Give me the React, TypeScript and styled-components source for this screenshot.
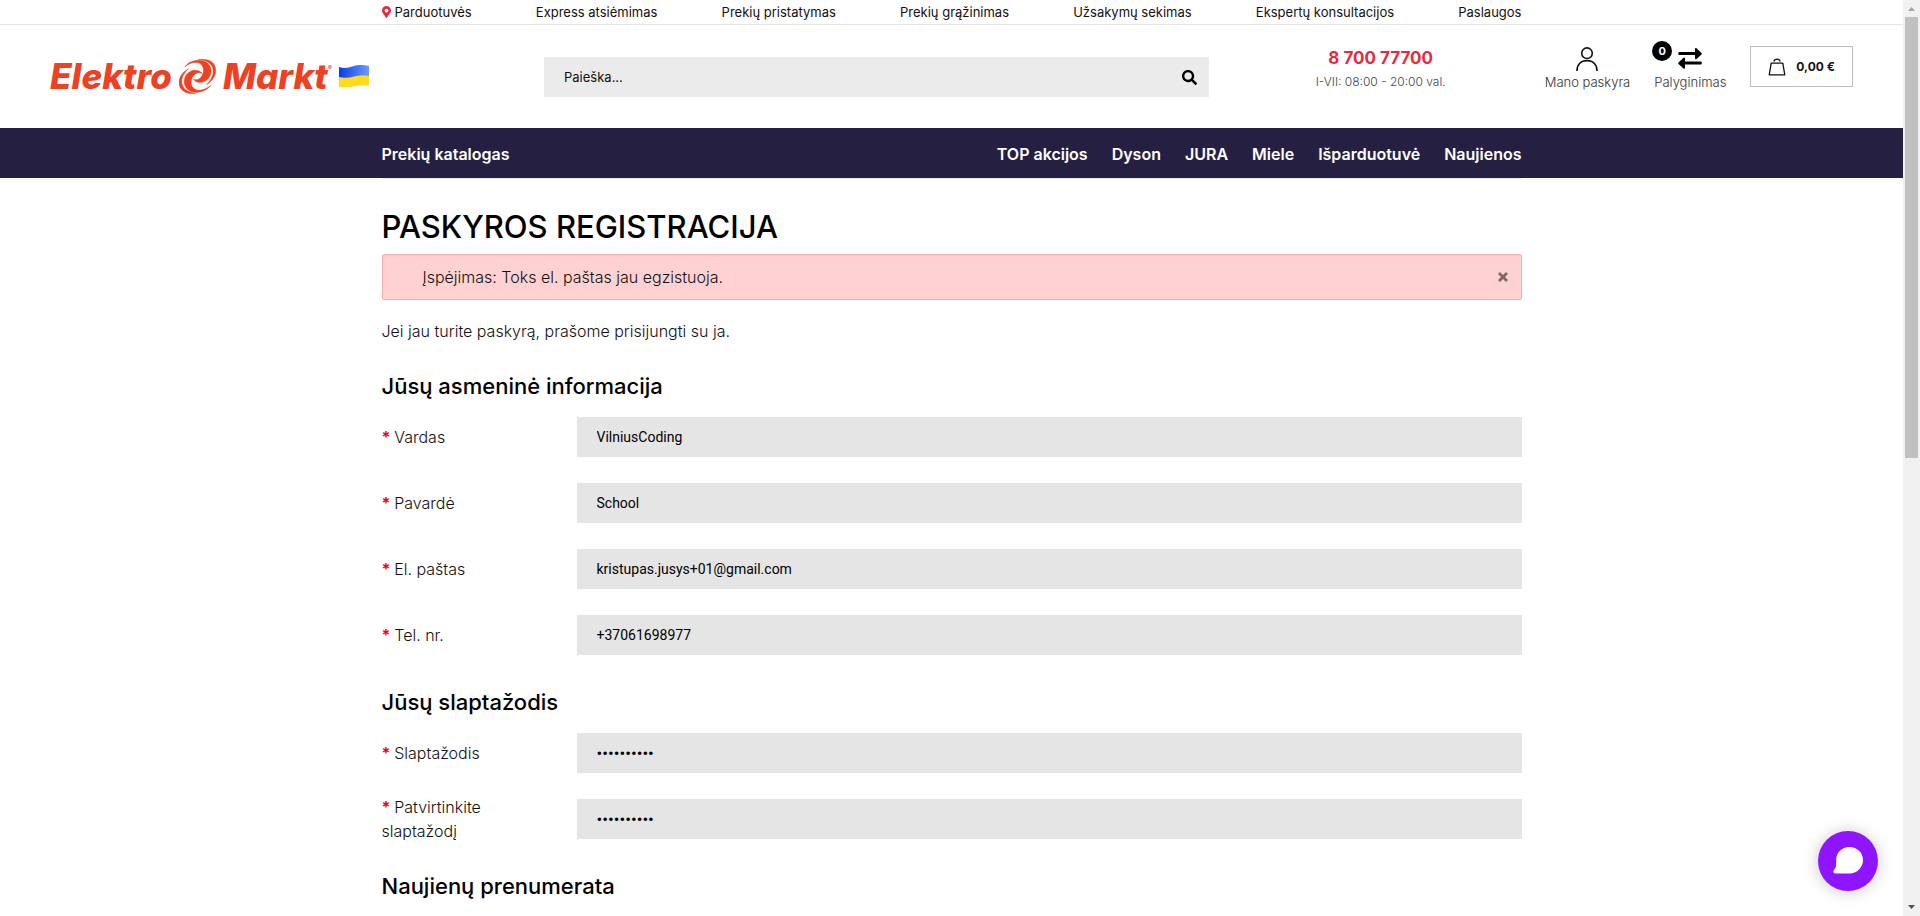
import React from "react";
import styled, { createGlobalStyle } from "styled-components";
import { FaMapMarkerAlt, FaSearch } from "react-icons/fa";

const GlobalStyle = createGlobalStyle`
  *, *::before, *::after { box-sizing: border-box; }
  body {
    margin: 0;
    background: #fff;
    color: #111;
    font-family: Inter, "Liberation Sans", sans-serif;
    scrollbar-width: none;
  }
  body::-webkit-scrollbar { display: none; }
  a { color: inherit; text-decoration: none; }
  svg { display: block; }
`;

const Page = styled.div`
  min-height: 100vh;
  padding-right: 17px;
`;

const Container = styled.div`
  width: 100%;
  max-width: 1170px;
  margin: 0 auto;
  padding: 0 15px;
`;

const TopBar = styled.nav`
  border-bottom: 1px solid #e5e5e5;
`;

const TopLinks = styled(Container)`
  display: flex;
  justify-content: space-between;
  align-items: center;
  height: 24px;
  font-size: 13px;
  line-height: 24px;
`;

const TopLink = styled.a`
  display: flex;
  align-items: center;
  gap: 4px;
`;

const Pin = styled(FaMapMarkerAlt)`
  width: 9px;
  height: 12px;
  color: #e62b40;
`;

const Header = styled.header`
  display: grid;
  grid-template-columns: 494px minmax(0, 1fr) 336px auto;
  height: 103px;
  padding: 0 50px;
`;

const Logo = styled.a`
  display: flex;
  align-items: center;
  align-self: start;
  gap: 7px;
  height: 37px;
  margin-top: 33px;
  color: #ee4023;
  font-size: 35px;
  font-weight: 800;
  font-style: italic;
  font-optical-sizing: none;
  line-height: 37px;
`;

const Swirl = styled.svg`
  width: 37px;
  height: 35px;
  flex: none;
`;

const LogoWord = styled.span`
  display: flex;
`;

const Registered = styled.sup`
  font-size: 6px;
  line-height: 20px;
`;

const Flag = styled.svg`
  width: 30px;
  height: 23px;
  flex: none;
`;

const SearchForm = styled.form`
  display: flex;
  align-self: start;
  height: 40px;
  margin-top: 32px;
  background: #ebebeb;
`;

const SearchInput = styled.input`
  flex: 1;
  min-width: 0;
  border: 0;
  padding: 0 20px;
  background: transparent;
  color: #111;
  font-family: inherit;
  font-size: 13px;
  &::placeholder { color: #111; opacity: 1; }
`;

const SearchButton = styled.button`
  display: flex;
  align-items: center;
  border: 0;
  padding: 0 12px;
  background: transparent;
  color: #000;
  font-size: 15px;
`;

const Contact = styled.div`
  display: flex;
  flex-direction: column;
  align-items: center;
  gap: 4px;
  padding: 22px 0 0 8px;
`;

const Phone = styled.a`
  color: #e62b40;
  font-size: 17px;
  font-weight: 700;
  line-height: 22px;
`;

const Hours = styled.span`
  color: #444;
  font-size: 12px;
  font-weight: 300;
  line-height: 18px;
`;

const Actions = styled.div`
  display: flex;
  align-items: flex-start;
  gap: 24px;
`;

const Action = styled.a`
  position: relative;
  display: flex;
  flex-direction: column;
  align-items: center;
  gap: 2px;
  padding-top: 22px;
  color: #333;
  font-size: 13px;
  font-weight: 300;
  line-height: 18px;
`;

const UserIcon = styled.svg`
  width: 22px;
  height: 24px;
`;

const ArrowsIcon = styled.svg`
  width: 24px;
  height: 24px;
`;

const Count = styled.span`
  position: absolute;
  top: 16px;
  left: -2px;
  width: 20px;
  height: 20px;
  border-radius: 50%;
  background: #000;
  color: #fff;
  font-size: 11px;
  font-weight: 700;
  line-height: 20px;
  text-align: center;
`;

const CartButton = styled.button`
  display: flex;
  align-items: center;
  gap: 10px;
  height: 41px;
  margin-top: 21px;
  padding: 0 17px;
  border: 1px solid #bdbdbd;
  background: #fff;
  color: #111;
  font-family: inherit;
  font-size: 12px;
  font-weight: 700;
`;

const BagIcon = styled.svg`
  width: 18px;
  height: 18px;
`;

const MainNav = styled.nav`
  background: #252041;
  color: #fff;
`;

const NavRow = styled(Container)`
  display: flex;
  justify-content: space-between;
  align-items: center;
  height: 50px;
  padding-top: 2px;
  font-size: 16px;
  font-weight: 600;
`;

const NavLinks = styled.div`
  display: flex;
  gap: 24px;
`;

const Divider = styled.hr`
  height: 1px;
  margin: 0;
  border: 0;
  background: #e9e9e9;
`;

const Title = styled.h1`
  margin: 30px 0 9px;
  color: #000;
  font-size: 31px;
  font-weight: 500;
  font-optical-sizing: none;
  line-height: 36px;
`;

const Alert = styled.div`
  display: flex;
  align-items: center;
  justify-content: space-between;
  height: 46px;
  margin-bottom: 19px;
  padding: 0 10px 0 40px;
  border: 1px solid #f7abae;
  border-radius: 2px;
  background: #ffd1d1;
  font-size: 16px;
  font-weight: 300;
  line-height: 24px;
`;

const CloseButton = styled.button`
  display: flex;
  border: 0;
  padding: 3px;
  background: transparent;
  color: #7d6767;
`;

const Text = styled.p`
  margin: 0;
  font-size: 16px;
  font-weight: 300;
  line-height: 24px;
`;

const Section = styled.fieldset`
  min-width: 0;
  margin: 29px 0 0;
  border: 0;
  padding: 0;
`;

const Legend = styled.legend`
  margin-bottom: 13px;
  padding: 0;
  color: #000;
  font-size: 22px;
  font-weight: 500;
  line-height: 28px;
`;

const Fields = styled.div`
  display: grid;
  gap: 18px;
`;

const Field = styled.div`
  display: grid;
  grid-template-columns: 165px minmax(0, 1fr);
  column-gap: 30px;
  align-items: center;
  min-height: 48px;
`;

const Label = styled.label`
  font-size: 16px;
  font-weight: 300;
  line-height: 24px;
  &::before {
    content: "* ";
    color: #f00;
    font-weight: 700;
  }
`;

const TextInput = styled.input`
  width: 100%;
  height: 40px;
  border: 0;
  padding: 0 20px;
  background: #e5e5e5;
  color: #000;
  font-family: Roboto, "Liberation Sans", sans-serif;
  font-size: 14px;
  &[type="password"] { font-size: 17px; }
`;

const ChatButton = styled.button`
  position: fixed;
  right: 42px;
  bottom: 25px;
  width: 60px;
  height: 60px;
  border: 0;
  border-radius: 50%;
  padding: 15px;
  background: #8f14ff;
  box-shadow: 0 1px 16px rgba(0, 0, 0, 0.22);
`;

const ScrollTrack = styled.div`
  position: fixed;
  top: 0;
  right: 0;
  bottom: 0;
  display: flex;
  flex-direction: column;
  width: 17px;
  padding: 0 2px;
  background: #f1f1f1;
`;

const ScrollArrow = styled.svg`
  width: 13px;
  height: 17px;
  flex: none;
`;

const ScrollRoom = styled.div`
  flex: 1;
`;

const ScrollThumb = styled.div`
  height: 50%;
  background: #c1c1c1;
`;

const topLinks = [
  "Express atsiėmimas",
  "Prekių pristatymas",
  "Prekių grąžinimas",
  "Užsakymų sekimas",
  "Ekspertų konsultacijos",
  "Paslaugos",
];

const navLinks = ["TOP akcijos", "Dyson", "JURA", "Miele", "Išparduotuvė", "Naujienos"];

type FieldSpec = { id: string; label: string; type: string; value: string };

const personal: FieldSpec[] = [
  { id: "firstname", label: "Vardas", type: "text", value: "VilniusCoding" },
  { id: "lastname", label: "Pavardė", type: "text", value: "School" },
  { id: "email", label: "El. paštas", type: "email", value: "kristupas.jusys+01@gmail.com" },
  { id: "telephone", label: "Tel. nr.", type: "tel", value: "+37061698977" },
];

const passwords: FieldSpec[] = [
  { id: "password", label: "Slaptažodis", type: "password", value: "0123456789" },
  { id: "confirm", label: "Patvirtinkite slaptažodį", type: "password", value: "0123456789" },
];

function FieldList({ items }: { items: FieldSpec[] }) {
  return (
    <Fields>
      {items.map((f) => (
        <Field key={f.id}>
          <Label htmlFor={f.id}>{f.label}</Label>
          <TextInput id={f.id} type={f.type} defaultValue={f.value} />
        </Field>
      ))}
    </Fields>
  );
}

function BrandLogo() {
  return (
    <Logo href="#" aria-label="Elektro Markt">
      <span>Elektro</span>
      <Swirl viewBox="18 24 114 106" fill="currentColor" stroke="currentColor" strokeWidth="1.5">
        <path d="M36 47C52 25 88 20 107 37C126 55 117 89 88 95C76 97 66 92 62 85C73 91 84 84 90 72C98 56 92 38 75 34C60 32 47 38 36 47Z" />
        <path d="M78 25C108 20 130 33 131 56C132 75 120 92 103 102C119 86 127 68 122 51C117 35 101 26 78 25Z" />
        <path d="M116 105C99 126 64 134 44 116C25 98 34 65 62 58C74 56 84 60 89 67C77 62 66 67 59 80C51 97 57 115 75 119C91 121 104 114 116 105Z" />
        <path d="M47 54C31 67 23 85 28 102C33 118 48 127 70 129C41 133 19 120 18 97C18 78 30 62 47 54Z" />
      </Swirl>
      <LogoWord>
        Markt<Registered>®</Registered>
      </LogoWord>
      <Flag viewBox="0 0 30 23">
        <defs>
          <linearGradient id="flagBlue" x1="0" x2="1" y1="0" y2="0">
            <stop offset="0" stopColor="#0a3be8" />
            <stop offset="0.5" stopColor="#3c6cf2" />
            <stop offset="1" stopColor="#6c9bff" />
          </linearGradient>
        </defs>
        <path d="M0 2C9 5 14 0 20 0C24 0 27 0 30 1V12C20 9 12 15 0 13Z" fill="url(#flagBlue)" />
        <path d="M0 12C12 15 18 8 30 11V21C20 18 12 24 0 22Z" fill="#ffdb1f" />
      </Flag>
    </Logo>
  );
}

export default function App() {
  return (
    <>
      <GlobalStyle />
      <Page>
        <TopBar>
          <TopLinks>
            <TopLink href="#">
              <Pin />
              Parduotuvės
            </TopLink>
            {topLinks.map((t) => (
              <TopLink href="#" key={t}>
                {t}
              </TopLink>
            ))}
          </TopLinks>
        </TopBar>

        <Header>
          <BrandLogo />
          <SearchForm role="search">
            <SearchInput type="text" placeholder="Paieška..." aria-label="Paieška" />
            <SearchButton type="button" aria-label="Ieškoti">
              <FaSearch />
            </SearchButton>
          </SearchForm>
          <Contact>
            <Phone href="#">8 700 77700</Phone>
            <Hours>I-VII: 08:00 - 20:00 val.</Hours>
          </Contact>
          <Actions>
            <Action href="#">
              <UserIcon viewBox="0 0 22 24" fill="none" stroke="#111" strokeWidth="1.6">
                <circle cx="11" cy="6.2" r="5.3" />
                <path d="M1 24C1 17.500 5 13.600 11 13.600S21 17.500 21 24" />
              </UserIcon>
              Mano paskyra
            </Action>
            <Action href="#">
              <Count>0</Count>
              <ArrowsIcon viewBox="0 0 24 24">
                <path
                  d="M1 5H17V1.800C17 1 18 .8 18.500 1.300L23.500 6C24 6.500 24 7 23.500 7.500L18.500 12C18 12.500 17 12.200 17 11.500V8H1C0 8 0 5 1 5ZM23 14.500H7V11.300C7 10.500 6 10.300 5.500 10.800L.5 15.500C0 16 0 16.500 .5 17L5.500 21.500C6 22 7 21.700 7 21V17.500H23C24 17.500 24 14.500 23 14.500Z"
                  fill="#000"
                />
              </ArrowsIcon>
              Palyginimas
            </Action>
            <CartButton type="button">
              <BagIcon viewBox="0 0 18 18" fill="none" stroke="#111" strokeWidth="1.3">
                <path d="M3.200 5.200H14.800L16.800 16.800H1.200Z" strokeLinejoin="round" />
                <path d="M5.800 3.500C6.600 .4 11.400 .4 12.200 3.500" />
              </BagIcon>
              0,00 €
            </CartButton>
          </Actions>
        </Header>

        <MainNav>
          <NavRow>
            <a href="#">Prekių katalogas</a>
            <NavLinks>
              {navLinks.map((t) => (
                <a href="#" key={t}>
                  {t}
                </a>
              ))}
            </NavLinks>
          </NavRow>
        </MainNav>

        <Container as="main">
          <Divider />
          <Title>PASKYROS REGISTRACIJA</Title>
          <Alert role="alert">
            Įspėjimas: Toks el. paštas jau egzistuoja.
            <CloseButton type="button" aria-label="Uždaryti">
              <svg width="10" height="10" viewBox="0 0 10 10" stroke="currentColor" strokeWidth="2.8">
                <path d="M1 1L9 9M9 1L1 9" />
              </svg>
            </CloseButton>
          </Alert>
          <Text>Jei jau turite paskyrą, prašome prisijungti su ja.</Text>
          <form>
            <Section>
              <Legend>Jūsų asmeninė informacija</Legend>
              <FieldList items={personal} />
            </Section>
            <Section>
              <Legend>Jūsų slaptažodis</Legend>
              <FieldList items={passwords} />
            </Section>
            <Section>
              <Legend>Naujienų prenumerata</Legend>
            </Section>
          </form>
        </Container>
      </Page>

      <ChatButton type="button" aria-label="Pokalbis">
        <svg width="30" height="30" viewBox="0 0 30 30" fill="#fff">
          <path d="M16.500 1C24 1 30 6.500 30 14C30 21.500 24 27.500 16.500 27.500H2.500C.5 27.500 -.3 25.500 1 24C3 21.500 3.200 20.500 3.200 14C3.200 6.500 9 1 16.500 1Z" />
        </svg>
      </ChatButton>

      <ScrollTrack aria-hidden="true">
        <ScrollArrow viewBox="0 0 13 17">
          <path d="M3 11L6.500 7L10 11Z" fill="#a3a3a3" />
        </ScrollArrow>
        <ScrollRoom>
          <ScrollThumb />
        </ScrollRoom>
        <ScrollArrow viewBox="0 0 13 17">
          <path d="M3 6L6.500 10L10 6Z" fill="#505050" />
        </ScrollArrow>
      </ScrollTrack>
    </>
  );
}
